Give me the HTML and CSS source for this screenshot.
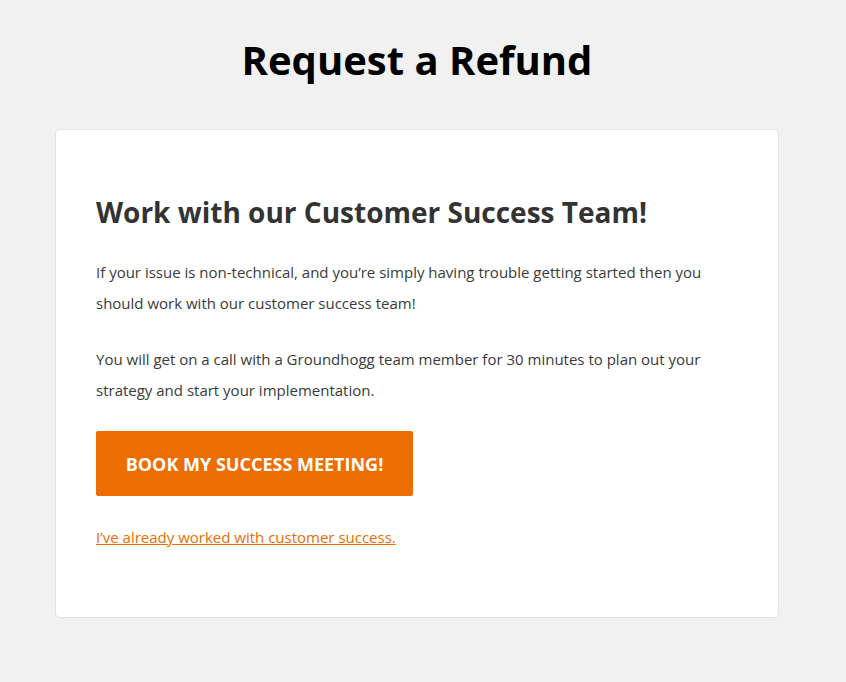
FILE: index.html
```html
<!DOCTYPE html>
<html lang="en">
<head>
<meta charset="utf-8">
<title>Request a Refund</title>
<link rel="stylesheet" href="styles.css">
</head>
<body>
<div class="page">
  <h1 class="title">Request a Refund</h1>
  <div class="card">
    <h2 class="card-title">Work with our Customer Success Team!</h2>
    <p class="text">If your issue is non-technical, and you’re simply having trouble getting started then you should work with our customer success team!</p>
    <p class="text">You will get on a call with a Groundhogg team member for 30 minutes to plan out your strategy and start your implementation.</p>
    <a class="btn" href="#">BOOK MY SUCCESS MEETING!</a>
    <a class="link" href="#">I’ve already worked with customer success.</a>
  </div>
</div>
</body>
</html>
```

FILE: styles.css
```css
html, body {
  margin: 0;
  padding: 0;
  background: #f1f1f1;
  font-family: "Open Sans", "Noto Sans", sans-serif;
}
.page {
  width: 724px;
  margin-left: 55px;
  padding-top: 36px;
}
.title {
  margin: 0;
  text-align: center;
  font-size: 40px;
  line-height: 48px;
  font-weight: 700;
  color: #000;
}
.card {
  margin-top: 45px;
  box-sizing: border-box;
  height: 489px;
  background: #fff;
  border: 1px solid #e2e2e2;
  border-radius: 5px;
  padding: 62px 40px 0 40px;
  display: flex;
  flex-direction: column;
  align-items: flex-start;
}
.card-title {
  margin: 0 0 25px 0;
  font-size: 28px;
  line-height: 40px;
  font-weight: 700;
  color: #333;
}
.text {
  margin: 0 0 25px 0;
  font-size: 15px;
  line-height: 31px;
  color: #3a3a3a;
}
.btn {
  display: flex;
  align-items: center;
  justify-content: center;
  width: 317px;
  height: 65px;
  background: #ec6d00;
  color: #fff;
  font-size: 18px;
  font-weight: 700;
  text-decoration: none;
  border-radius: 2px;
}
.link {
  margin-top: 29px;
  font-size: 15px;
  line-height: 24px;
  color: #ec6d00;
  text-decoration: underline;
}
```
